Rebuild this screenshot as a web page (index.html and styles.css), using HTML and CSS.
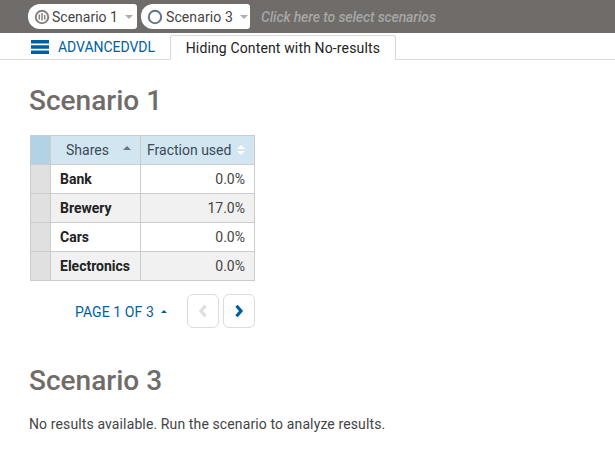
FILE: index.html
```html
<!DOCTYPE html>
<html lang="en">
<head>
<meta charset="utf-8">
<title>Hiding Content with No-results</title>
<link rel="stylesheet" href="styles.css">
</head>
<body>
<header class="topbar">
  <div class="pill">
    <svg class="pill-icon" width="16" height="16" viewBox="0 0 16 16"><circle cx="8" cy="8" r="6.2" fill="none" stroke="#84817f" stroke-width="2"/><path d="M5.3 5.5v5M8 4v7.5M10.7 6v4.5" stroke="#84817f" stroke-width="1.5" fill="none"/></svg>
    <span>Scenario 1</span><i class="caret"></i>
  </div>
  <div class="pill">
    <svg class="pill-icon" width="16" height="16" viewBox="0 0 16 16"><circle cx="8" cy="8" r="6.2" fill="none" stroke="#66757f" stroke-width="2"/></svg>
    <span class="wide">Scenario 3</span><i class="caret"></i>
  </div>
  <span class="hint">Click here to select scenarios</span>
</header>
<nav class="tabs">
  <svg class="menu" width="18" height="14" viewBox="0 0 18 14"><path d="M0 0h18v3.6H0zM0 5.2h18v3.6H0zM0 10.4h18V14H0z" fill="#005f9e"/></svg>
  <span class="brand">ADVANCEDVDL</span>
  <span class="tab">Hiding Content with No-results</span>
</nav>
<main class="content">
  <h1>Scenario 1</h1>
  <table class="grid">
    <thead>
      <tr>
        <th class="idx"></th>
        <th class="shares">Shares<i class="sort-up"></i></th>
        <th class="frac">Fraction used<span class="sort-both"><i></i><i></i></span></th>
      </tr>
    </thead>
    <tbody>
      <tr><td class="idx"></td><td class="name">Bank</td><td class="num">0.0%</td></tr>
      <tr class="alt"><td class="idx"></td><td class="name">Brewery</td><td class="num">17.0%</td></tr>
      <tr><td class="idx"></td><td class="name">Cars</td><td class="num">0.0%</td></tr>
      <tr class="alt"><td class="idx"></td><td class="name">Electronics</td><td class="num">0.0%</td></tr>
    </tbody>
  </table>
  <div class="pager">
    <span class="page-label">PAGE 1 OF 3</span><i class="page-caret"></i>
    <button class="page-btn" type="button"><svg width="10" height="14" viewBox="0 0 10 14"><path d="M7.5 1.8 3 7l4.5 5.2" fill="none" stroke="#dedede" stroke-width="3.2"/></svg></button>
    <button class="page-btn" type="button"><svg width="10" height="14" viewBox="0 0 10 14"><path d="M2.5 1.8 7 7l-4.5 5.2" fill="none" stroke="#005f9e" stroke-width="3.2"/></svg></button>
  </div>
  <h1 class="second">Scenario 3</h1>
  <p class="empty">No results available. Run the scenario to analyze results.</p>
</main>
</body>
</html>
```
FILE: styles.css
```css
* { box-sizing: border-box; }
html, body { margin: 0; padding: 0; background: #fff; }
body { font-family: Roboto, "Liberation Sans", sans-serif; color: #333; overflow: hidden; }

.topbar {
  height: 33px;
  background: #6f6c6a;
  display: flex;
  align-items: center;
  padding: 0 0 0 28px;
  gap: 4px;
}
.pill {
  height: 25px;
  width: 109px;
  background: #fff;
  border-radius: 12px 3px 3px 12px;
  display: flex;
  align-items: center;
  padding-left: 6px;
  font-size: 14px;
  color: #444;
}
.pill-icon { flex: none; margin-right: 2px; }
.wide { margin-left: 1px; letter-spacing: 0.1px; }
.caret {
  width: 0; height: 0;
  margin-left: 7px;
  border: 4px solid transparent;
  border-top: 4px solid #b0aeac;
  border-bottom: 0;
}
.hint {
  margin-left: 7px;
  font-size: 14px;
  font-style: italic;
  font-weight: 500;
  color: #a8a6a4;
  letter-spacing: -0.12px;
}

.tabs {
  height: 27px;
  display: flex;
  align-items: flex-end;
  padding-left: 31px;
  border-bottom: 1px solid #d9d9d9;
}
.menu { align-self: center; flex: none; margin-top: 1px; }
.brand {
  align-self: center;
  margin-left: 9px;
  font-size: 14px;
  color: #005f9e;
  margin-top: 1px;
  letter-spacing: -0.05px;
}
.tab {
  margin-left: 15px;
  height: 25px;
  width: 226px;
  margin-bottom: -1px;
  background: #fff;
  border: 1px solid #d9d9d9;
  border-bottom: 1px solid #fff;
  border-radius: 3px 3px 0 0;
  text-align: center;
  font-size: 14px;
  line-height: 24px;
  color: #222;
  letter-spacing: 0.14px;
}

.content { padding: 0 30px; }
h1 {
  margin: 0;
  padding-top: 24px;
  height: 75px;
  font-size: 28px;
  line-height: 33px;
  font-weight: 500;
  color: #6f6c6a;
}
.content > h1:first-child { margin-left: -1px; }
.grid {
  border-collapse: collapse;
  width: 225px;
  table-layout: fixed;
  font-size: 14px;
}
.grid th, .grid td { border: 1px solid #ccc; padding: 0; height: 29px; }
.grid th { height: 29px; background: #d2e6f1; font-weight: 400; color: #3b4a54; position: relative; }
.grid th.idx { background: #b2d2e6; width: 20px; }
.grid td.idx { background: #e0e0e0; width: 20px; }
.shares { width: 90px; text-align: left; padding-left: 15px !important; }
.frac { text-align: left; padding-left: 6px !important; white-space: nowrap; }
.sort-up {
  position: absolute;
  right: 9px; top: 10px;
  width: 0; height: 0;
  border: 4px solid transparent;
  border-bottom: 4px solid #6b7780;
  border-top: 0;
}
.sort-both { position: absolute; right: 9px; top: 9px; display: flex; flex-direction: column; gap: 2px; }
.sort-both i { width: 0; height: 0; border: 4px solid transparent; }
.sort-both i:first-child { border-bottom: 4px solid #fff; border-top: 0; }
.sort-both i:last-child { border-top: 4px solid #fff; border-bottom: 0; }
.name { font-weight: 700; padding-left: 9px !important; color: #222; }
.num { text-align: right; padding-right: 9px !important; color: #444; }
.alt td { background: #f1f1f1; }
.alt td.idx { background: #e0e0e0; }

.pager {
  width: 225px;
  height: 34px;
  margin-top: 13px;
  display: flex;
  align-items: center;
  justify-content: flex-end;
  gap: 4px;
}
.page-label { font-size: 14px; color: #005f9e; letter-spacing: 0.1px; margin-top: 2px; }
.page-caret {
  width: 0; height: 0;
  margin: 0 16.5px 0 2.5px;
  border: 3.5px solid transparent;
  border-bottom: 3.5px solid #005f9e;
  border-top: 0;
}
.page-btn {
  width: 32px; height: 34px;
  background: #fff;
  border: 1px solid #dcdcdc;
  border-radius: 6px;
  padding: 0;
  display: flex;
  align-items: center;
  justify-content: center;
}
h1.second { margin-top: 34px; height: 54px; padding-top: 0; line-height: 38px; margin-left: -1px; }
.empty { margin: 0 0 0 -1px; font-size: 14px; color: #444; letter-spacing: 0.12px; }
```
